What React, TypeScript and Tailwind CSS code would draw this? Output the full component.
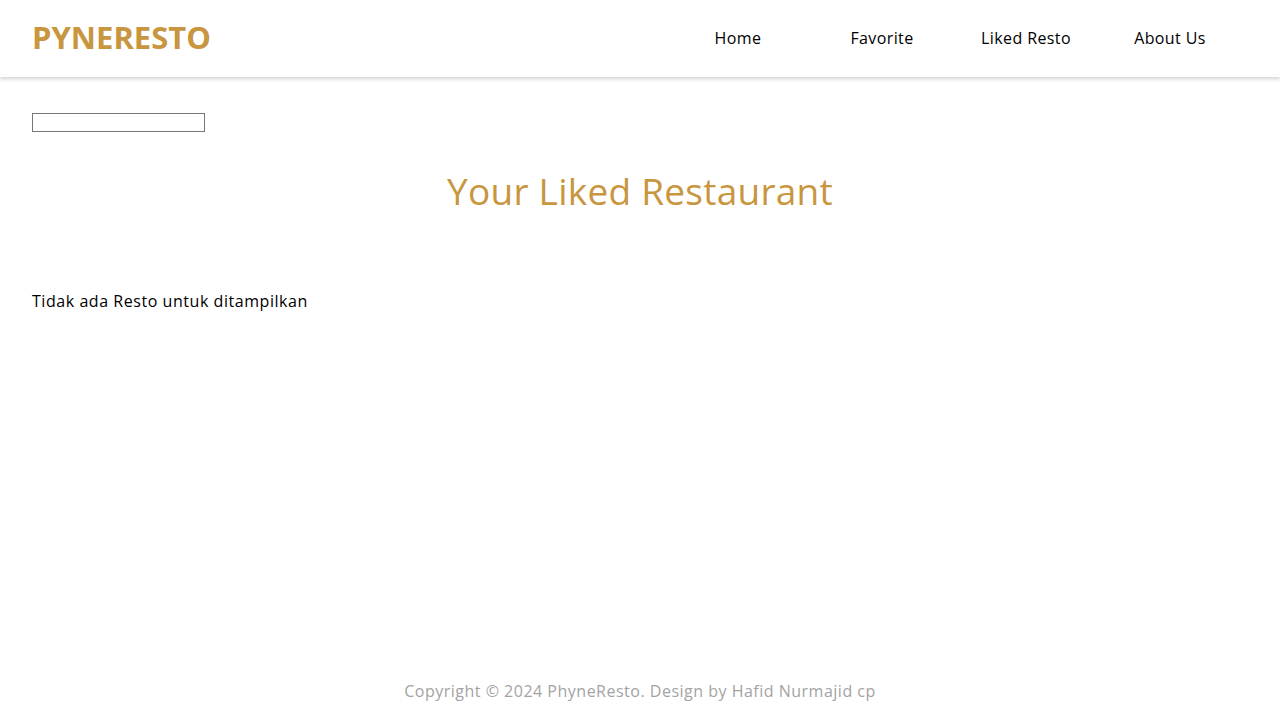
import React from 'react';

const NAV = ['Home', 'Favorite', 'Liked Resto', 'About Us'];

export default function App() {
  return (
    <div className="min-h-[720px] flex flex-col bg-white font-['Open_Sans',sans-serif]">
      <header className="h-[77px] flex items-center justify-between pl-8 pr-[38px] bg-white shadow-[0_2px_4px_rgba(0,0,0,0.18)] relative z-10">
        <a href="#" className="text-[31px] font-bold text-[#c8963e] leading-none pb-[2px]">PYNERESTO</a>
        <nav>
          <ul className="flex">
            {NAV.map((item) => (
              <li key={item} className="w-[144px] text-center pb-[2px]">
                <a href="#" className="text-[16px] text-black tracking-[0.4px]">{item}</a>
              </li>
            ))}
          </ul>
        </nav>
      </header>

      <main className="flex-1 px-8 pt-9">
        <input type="text" className="block w-[173px] h-[19px] border border-[#767676]" />
        <h2 className="mt-[37px] text-center text-[37px] text-[#c8963e] leading-[1.2] tracking-[0.25px]">Your Liked Restaurant</h2>
        <p className="mt-[76px] text-[16px] text-black tracking-[0.55px]">Tidak ada Resto untuk ditampilkan</p>
      </main>

      <footer className="h-[60px] flex items-center justify-center pt-[2px]">
        <p className="text-[16px] text-[#a3a3a3] tracking-[0.5px]">Copyright © 2024 PhyneResto. Design by Hafid Nurmajid cp</p>
      </footer>
    </div>
  );
}
